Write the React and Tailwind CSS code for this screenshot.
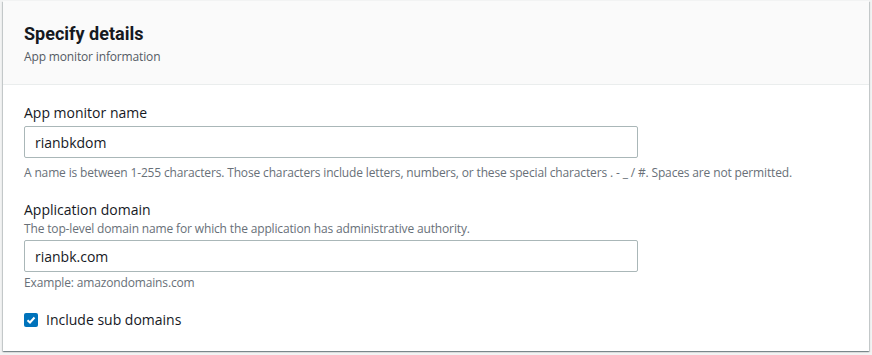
import React, { useState } from 'react';

function App() {
  const [name, setName] = useState('rianbkdom');
  const [domain, setDomain] = useState('rianbk.com');
  const [subDomains, setSubDomains] = useState(true);

  return (
    <div className="w-[872px] h-[355px] bg-[#f2f3f3] pl-[3px] pr-[3px] pt-[1px] font-['Open_Sans',sans-serif] text-[#16191f]">
      <div className="bg-white h-[350px] shadow-[0_1px_1px_0_rgba(0,28,36,0.3),1px_1px_1px_0_rgba(0,28,36,0.15),-1px_1px_1px_0_rgba(0,28,36,0.15)]">
        {/* Header */}
        <div className="h-[84px] bg-[#fafafa] border-b border-[#eaeded] px-[21px] pt-[22px]">
          <h2 className="text-[18px] font-bold leading-[22px] font-['Roboto',sans-serif]">Specify details</h2>
          <p className="text-[12px] leading-[16px] text-[#545b64] mt-[4px] tracking-[-0.15px]">App monitor information</p>
        </div>

        {/* Body */}
        <div className="px-[21px] pt-[17px] flex flex-col">
          <label className="text-[14px] leading-[22px]">App monitor name</label>
          <input
            value={name}
            onChange={(e) => setName(e.target.value)}
            className="mt-[2px] w-[614px] h-[32px] border border-[#aab7b8] rounded-[2px] px-[10px] text-[14px] outline-none"
          />
          <p className="text-[12px] leading-[16px] text-[#687078] mt-[7px] tracking-[-0.15px]">
            A name is between 1-255 characters. Those characters include letters, numbers, or these special characters . - _ / #. Spaces are not permitted.
          </p>

          <label className="text-[14px] leading-[22px] mt-[18px]">Application domain</label>
          <p className="text-[12px] leading-[16px] text-[#687078] tracking-[-0.15px]">The top-level domain name for which the application has administrative authority.</p>
          <input
            value={domain}
            onChange={(e) => setDomain(e.target.value)}
            className="mt-[3px] w-[614px] h-[32px] border border-[#aab7b8] rounded-[2px] px-[10px] text-[14px] outline-none"
          />
          <p className="text-[12px] leading-[16px] text-[#687078] mt-[3px] tracking-[-0.15px]">Example: amazondomains.com</p>

          <label className="flex items-center gap-[8px] mt-[18px] text-[14px] leading-[22px] cursor-pointer">
            <span
              onClick={() => setSubDomains(!subDomains)}
              className={subDomains
                ? 'w-[14px] h-[14px] rounded-[2px] bg-[#0073bb] flex items-center justify-center'
                : 'w-[14px] h-[14px] rounded-[2px] border-2 border-[#879596] bg-white'}
            >
              {subDomains && (
                <svg width="10" height="10" viewBox="0 0 10 10">
                  <path d="M1.5 5.2 L4 7.5 L8.5 2.5" fill="none" stroke="white" strokeWidth="2" />
                </svg>
              )}
            </span>
            <span onClick={() => setSubDomains(!subDomains)}>Include sub domains</span>
          </label>
        </div>
      </div>
    </div>
  );
}

export default App;
